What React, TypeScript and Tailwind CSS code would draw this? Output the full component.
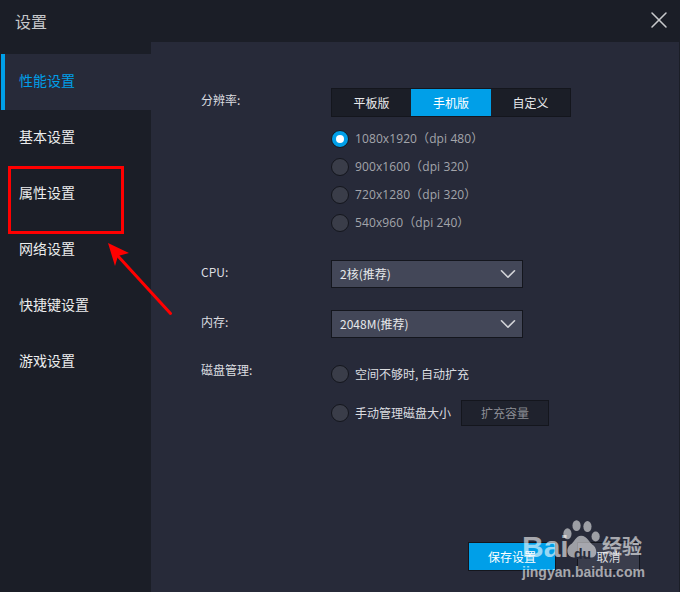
import React from "react";
import { X, ChevronDown } from "lucide-react";

const font = { fontFamily: '"Noto Sans CJK SC", sans-serif' };

const nav = ["性能设置", "基本设置", "属性设置", "网络设置", "快捷键设置", "游戏设置"];

function Radio({ on }: { on?: boolean }) {
  return on ? (
    <span className="flex h-[18px] w-[18px] shrink-0 items-center justify-center rounded-full border border-[#14161d] bg-[#009fe8]">
      <span className="h-2 w-2 rounded-full bg-white" />
    </span>
  ) : (
    <span className="h-[18px] w-[18px] shrink-0 rounded-full border border-[#14161d] bg-[#3a3d49]" />
  );
}

function Res({ text }: { text: string }) {
  return (
    <div className="flex h-7 items-center gap-[6px]">
      <Radio on={text.startsWith("1080")} />
      <span className="text-[12px] tracking-[0.1px] text-[#a3a5ab] [font-family:'Open_Sans','Noto_Sans_CJK_SC',sans-serif]">{text}</span>
    </div>
  );
}

function Select({ text }: { text: string }) {
  return (
    <div className="flex h-[28px] w-[192px] items-center justify-between border border-[#14161d] bg-[#434758] pl-2 pr-px text-xs text-[#e6e7ea]">
      <span>{text}</span>
      <ChevronDown size={26} strokeWidth={1.5} className="text-[#d4d5d9]" />
    </div>
  );
}

export default function App() {
  return (
    <div style={font} className="relative flex h-[592px] w-[680px] flex-col overflow-hidden bg-[#1b1e27]">
      <header className="flex h-[42px] shrink-0 items-center justify-between pl-[15px] pr-[7px]">
        <span className="text-[16px] text-[#c6c7ca]">设置</span>
        <X size={28} strokeWidth={1.3} className="-mt-0.5 text-[#c8c9cc]" />
      </header>

      <div className="flex min-h-0 flex-1 pr-px">
        <aside className="w-[151px] shrink-0 pt-3">
          {nav.map((n, i) => (
            <div
              key={n}
              className={
                i === 0
                  ? "ml-px flex h-14 items-center border-l-4 border-[#009fe8] bg-[#272a39] pb-1 pl-[14px] text-sm text-[#009fe8]"
                  : "flex h-14 items-center pb-1 pl-[19px] text-sm text-[#eceded]"
              }
            >
              {n}
            </div>
          ))}
        </aside>

        <main className="flex min-w-0 flex-1 flex-col bg-[#272a39] pl-[50px] pt-[46px] text-xs text-[#dcdde0]">
          <div className="flex">
            <span className="w-[130px] pt-[4px]">分辨率:</span>
            <div>
              <div className="flex h-[29px] w-[240px] border border-[#14161d] bg-[#1b1e27] text-[#e9eaec]">
                <span className="flex w-[79px] items-center justify-center">平板版</span>
                <span className="flex w-[80px] items-center justify-center bg-[#009fe8] text-white">手机版</span>
                <span className="flex w-[79px] items-center justify-center">自定义</span>
              </div>
              <div className="mt-[8px] flex flex-col">
                <Res text="1080x1920（dpi 480）" />
                <Res text="900x1600（dpi 320）" />
                <Res text="720x1280（dpi 320）" />
                <Res text="540x960（dpi 240）" />
              </div>
            </div>
          </div>

          <div className="mt-[23px] flex items-center">
            <span className="w-[130px] pb-1">CPU:</span>
            <Select text="2核(推荐)" />
          </div>
          <div className="mt-[22px] flex items-center">
            <span className="w-[130px] pb-1">内存:</span>
            <Select text="2048M(推荐)" />
          </div>

          <div className="mt-[17px] flex">
            <span className="w-[130px] pt-[7px]">磁盘管理:</span>
            <div className="flex flex-col">
              <div className="mt-[7px] flex h-[24px] items-center gap-[6px]">
                <Radio />
                <span>空间不够时, 自动扩充</span>
              </div>
              <div className="mt-[14px] flex h-[26px] items-center gap-[6px]">
                <Radio />
                <span>手动管理磁盘大小</span>
                <span className="ml-1 flex h-[26px] w-[88px] items-center justify-center border border-[#14161d] bg-[#1f222d] text-[#8b8d94]">
                  扩充容量
                </span>
              </div>
            </div>
          </div>

          <div className="mt-auto mb-[21px] flex justify-end gap-[21px] pr-[39px]">
            <button className="flex h-[29px] w-[88px] items-center justify-center border border-[#14161d] bg-[#009fe8] text-white">
              保存设置
            </button>
            <button className="flex h-[29px] w-[63px] items-center justify-center border border-[#14161d] bg-[#3a3d4c] text-[#dcdde0]">
              取消
            </button>
          </div>
        </main>
      </div>

      {/* Red annotation box */}
      <div className="absolute left-2 top-[166px] h-[68px] w-[116px] border-[3px] border-[#ff0000]" />

      {/* Red annotation arrow */}
      <svg className="absolute left-[100px] top-[235px]" width="80" height="85" viewBox="0 0 80 85">
        <path d="M70.5 78.5 L17 20" stroke="#ff0000" strokeWidth="3" strokeLinecap="round" />
        <path d="M8 8 L29 18 L18 21 L15 31 Z" fill="#ff0000" />
      </svg>

      {/* Baidu watermark */}
      <div className="pointer-events-none absolute left-[522px] top-[537px] h-[50px] w-[150px] text-white/60">
        <span className="absolute left-0 top-[-6px] text-[30px] font-bold leading-[32px] [font-family:'Liberation_Sans',sans-serif]">Bai</span>
        <svg className="absolute left-[40px] top-[-19px]" width="40" height="48" viewBox="0 0 44 50" fill="#ffffff" fillOpacity="0.55">
          <ellipse cx="6" cy="16" rx="4.5" ry="6" />
          <ellipse cx="16" cy="7" rx="4.5" ry="6" />
          <ellipse cx="28" cy="8" rx="4.5" ry="6" />
          <ellipse cx="37" cy="19" rx="4.5" ry="5.5" />
          <path d="M21 18 C15 18 14 25 9 28 C4 32 5 42 13 42 C17 42 19 40 22 40 C26 40 28 42 32 42 C39 42 39 33 35 29 C30 26 28 18 21 18 Z" />
        </svg>
        <span className="absolute left-[52px] top-[9px] text-[14px] font-bold leading-4 text-[#272a39] [font-family:'Liberation_Sans',sans-serif]">du</span>
        <span className="absolute left-[80px] top-[-3px] text-[20px] font-bold leading-6">经验</span>
        <span className="absolute left-0 top-[26px] text-[14px] font-bold leading-[18px] [font-family:'Liberation_Sans',sans-serif]">jingyan.baidu.com</span>
      </div>
    </div>
  );
}
